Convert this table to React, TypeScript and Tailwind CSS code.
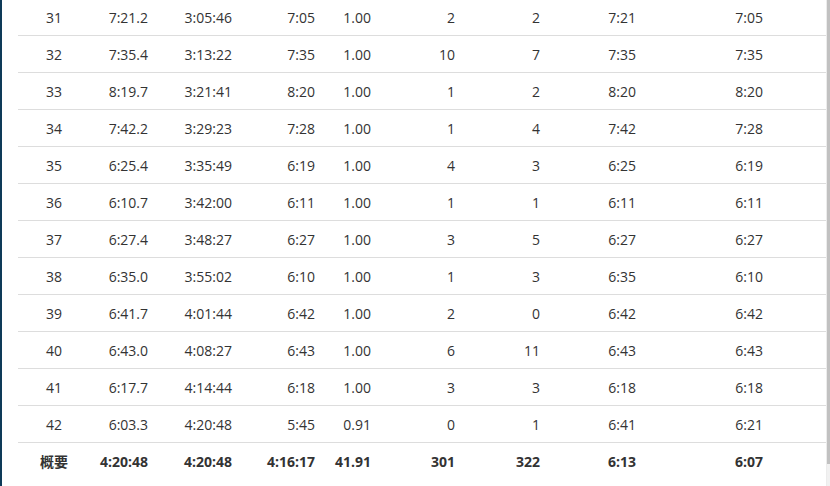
import React from "react";

const rows: string[][] = [
  ["31", "7:21.2", "3:05:46", "7:05", "1.00", "2", "2", "7:21", "7:05"],
  ["32", "7:35.4", "3:13:22", "7:35", "1.00", "10", "7", "7:35", "7:35"],
  ["33", "8:19.7", "3:21:41", "8:20", "1.00", "1", "2", "8:20", "8:20"],
  ["34", "7:42.2", "3:29:23", "7:28", "1.00", "1", "4", "7:42", "7:28"],
  ["35", "6:25.4", "3:35:49", "6:19", "1.00", "4", "3", "6:25", "6:19"],
  ["36", "6:10.7", "3:42:00", "6:11", "1.00", "1", "1", "6:11", "6:11"],
  ["37", "6:27.4", "3:48:27", "6:27", "1.00", "3", "5", "6:27", "6:27"],
  ["38", "6:35.0", "3:55:02", "6:10", "1.00", "1", "3", "6:35", "6:10"],
  ["39", "6:41.7", "4:01:44", "6:42", "1.00", "2", "0", "6:42", "6:42"],
  ["40", "6:43.0", "4:08:27", "6:43", "1.00", "6", "11", "6:43", "6:43"],
  ["41", "6:17.7", "4:14:44", "6:18", "1.00", "3", "3", "6:18", "6:18"],
  ["42", "6:03.3", "4:20:48", "5:45", "0.91", "0", "1", "6:41", "6:21"],
];

const summary = ["概要", "4:20:48", "4:20:48", "4:16:17", "41.91", "301", "322", "6:13", "6:07"];

function Row({ cells, bold, border }: { cells: string[]; bold?: boolean; border?: boolean }) {
  return (
    <div
      className={`grid grid-cols-[72px_58px_84px_83px_56px_84px_85px_96px_127px_63px] h-[37px] items-center ${
        border ? "border-b border-[#dddddd]" : ""
      } ${bold ? "font-bold" : ""}`}
    >
      {cells.map((c, i) => (
        <div key={i} className={i === 0 ? "text-center" : "text-right"}>
          {c}
        </div>
      ))}
      <div />
    </div>
  );
}

export default function App() {
  return (
    <div
      className="w-[830px] h-[486px] flex overflow-hidden bg-white text-[14px] text-[#333333]"
      style={{ fontFamily: "'Open Sans', 'Noto Sans CJK SC', sans-serif" }}
    >
      <div className="w-[2px] shrink-0 bg-[#0e3a58]" />
      <div className="flex-1 pl-[16px] overflow-hidden">
        <div className="-mt-[1px]">
          {rows.map((r, i) => (
            <Row key={i} cells={r} border />
          ))}
          <Row cells={summary} bold />
        </div>
      </div>
      <div className="w-[4px] shrink-0 flex">
        <div className="w-[1px] bg-[#ececec]" />
        <div className="flex-1 flex flex-col">
          <div className="h-[464px] bg-[#c1c1c1]" />
          <div className="flex-1 bg-[#f1f1f1]" />
        </div>
      </div>
    </div>
  );
}
